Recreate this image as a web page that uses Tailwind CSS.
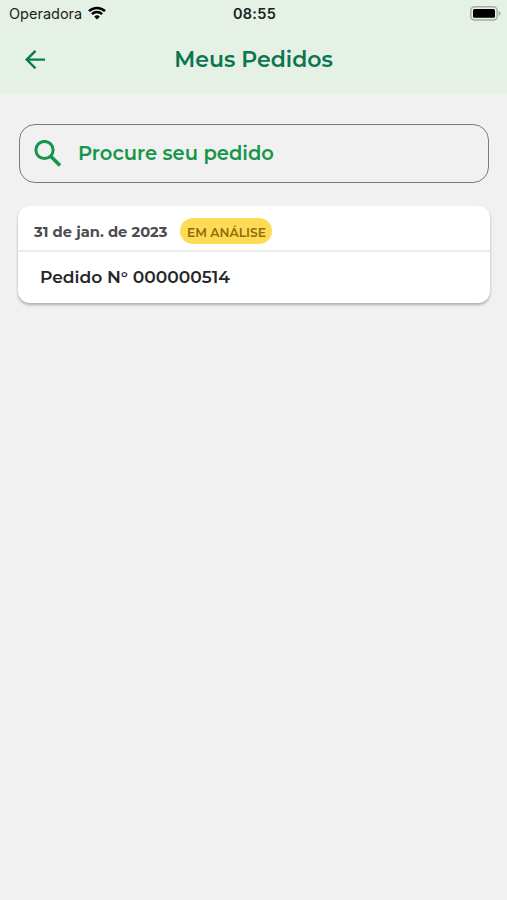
<!DOCTYPE html>
<html lang="pt-BR">
  <head>
    <meta charset="UTF-8" />
    <meta name="viewport" content="width=device-width, initial-scale=1.0" />
    <title>Meus Pedidos</title>
    <script src="https://cdn.jsdelivr.net/npm/@tailwindcss/browser@4"></script>
  </head>
  <body class="min-h-screen bg-[#f1f1f1] font-['Montserrat','Inter',sans-serif]">
    <header class="h-[94px] bg-[#e5f1e5]">
      <!-- status bar -->
      <div class="grid h-7 grid-cols-[1fr_auto_1fr] items-center pl-[8px] pr-[6px] font-['Inter',sans-serif] text-[#1c211d]">
        <div class="flex items-center gap-[6px] pl-px">
          <span class="whitespace-nowrap text-[14.5px] leading-5">Operadora</span>
          <svg class="h-[14px] w-[18px] shrink-0 -translate-y-px" viewBox="0 0 18 14" fill="none" stroke="#000" stroke-width="2.5">
            <path d="M1 5.2a11.3 11.3 0 0 1 16 0" />
            <path d="M3.9 8.1a7.2 7.2 0 0 1 10.2 0" />
            <path d="M9 13.5l-2.8-2.8a4 4 0 0 1 5.6 0z" fill="#000" stroke="none" />
          </svg>
        </div>
        <span class="text-center text-[14.5px] font-semibold leading-5 tracking-[0.3px]">08:55</span>
        <svg class="h-[15px] w-[31px] -translate-y-px justify-self-end" viewBox="0 0 31 15">
          <rect x="0.8" y="0.8" width="26.4" height="13.2" rx="3.8" fill="#e5f1e5" stroke="#a5aca5" stroke-width="1.5" />
          <rect x="3" y="3" width="22" height="8.8" rx="1.5" fill="#000" />
          <path d="M28.7 5v5q2-.8 2-2.5t-2-2.5z" fill="#a5aca5" />
        </svg>
      </div>
      <div class="grid h-[63px] grid-cols-[1fr_auto_1fr] items-center px-[25px]">
        <svg class="h-5 w-5" viewBox="0 0 20 20" fill="none" stroke="#0c7a52" stroke-width="2.4">
          <path d="M20 9.6H2M10.5 .8L1.7 9.6l8.8 8.8" />
        </svg>
        <h1 class="whitespace-nowrap text-[22px] font-semibold leading-7 text-[#0c7552]">Meus Pedidos</h1>
      </div>
    </header>

    <main class="pl-[18px] pr-[17px] pt-[30px]">
      <div class="mx-px flex h-[59px] items-center gap-[16px] rounded-[16px] border border-[#7b7b7b] pl-[14px]">
        <svg class="h-7 w-7" viewBox="0 0 28 28" fill="none" stroke="#17964a">
          <circle cx="10.5" cy="10" r="8.6" stroke-width="3" />
          <path d="M16.7 16.2l9.3 9.3" stroke-width="3.6" />
        </svg>
        <span class="whitespace-nowrap pb-[2px] text-[19.5px] font-semibold leading-7 text-[#17964a]">Procure seu pedido</span>
      </div>

      <article class="mt-[23px] h-[97px] rounded-[12px] bg-white shadow-[0_2px_3px_rgba(0,0,0,0.28)]">
        <div class="flex h-[46px] items-center gap-[13px] border-b-2 border-[#ececec] pl-4 pt-[6px]">
          <time class="whitespace-nowrap pt-px text-[14.7px] font-bold leading-5 text-[#4a4c50]">31 de jan. de 2023</time>
          <span class="flex h-[26px] w-[92px] items-center justify-center whitespace-nowrap rounded-full bg-[#fedb55] pt-[4px] text-[12.3px] font-semibold text-[#8f6c08]">EM ANÁLISE</span>
        </div>
        <p class="pl-[22px] pt-[12px] text-[17.1px] font-semibold leading-[26px] text-[#252628]">Pedido N° 000000514</p>
      </article>
    </main>
  </body>
</html>
